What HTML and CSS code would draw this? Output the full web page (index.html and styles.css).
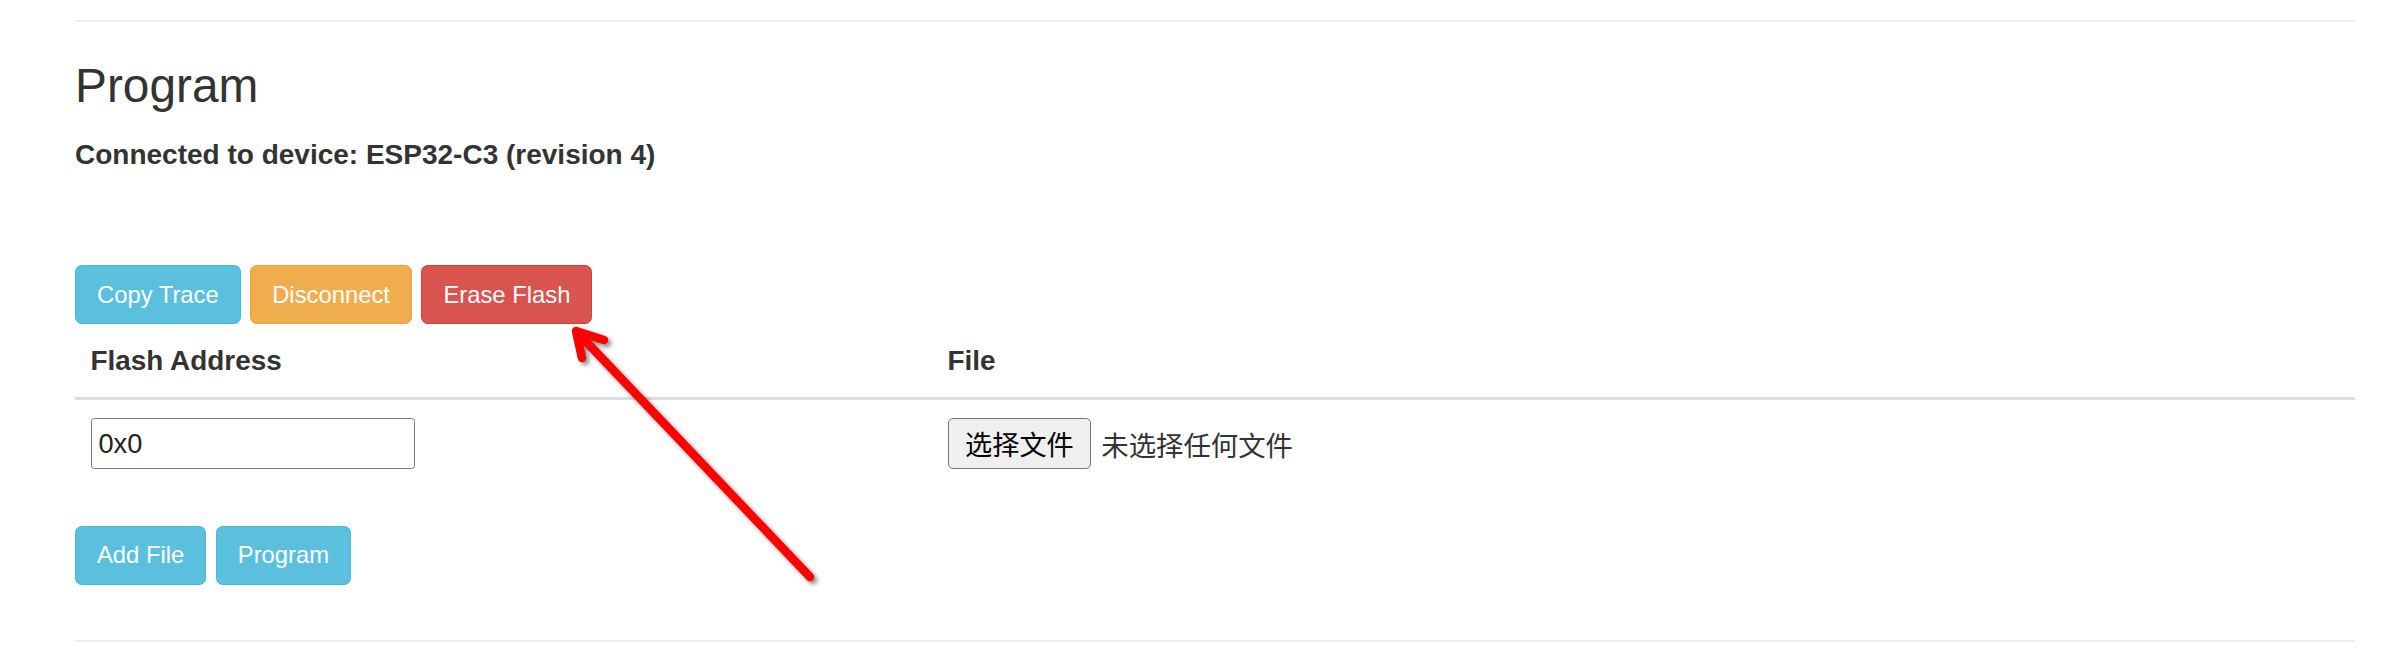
FILE: index.html
```html
<!DOCTYPE html>
<html lang="en">
<head>
<meta charset="utf-8">
<title>Program</title>
<link rel="stylesheet" href="styles.css">
</head>
<body>
<main class="page">
  <hr class="rule">
  <h2 class="title">Program</h2>
  <p class="status">Connected to device: ESP32-C3 (revision 4)</p>
  <div class="actions">
    <button class="btn btn-info">Copy Trace</button>
    <button class="btn btn-warning">Disconnect</button>
    <button class="btn btn-danger">Erase Flash</button>
  </div>
  <table class="files">
    <colgroup><col class="col-addr"><col></colgroup>
    <thead>
      <tr><th>Flash Address</th><th>File</th></tr>
    </thead>
    <tbody>
      <tr>
        <td><div class="cell"><input class="addr" type="text" value="0x0"></div></td>
        <td><div class="cell"><button class="file-btn">选择文件</button><span class="file-label">未选择任何文件</span></div></td>
      </tr>
    </tbody>
  </table>
  <div class="actions actions-bottom">
    <button class="btn btn-info">Add File</button>
    <button class="btn btn-info">Program</button>
  </div>
  <hr class="rule rule-bottom">
</main>
<svg class="arrow" width="2383" height="651" viewBox="0 0 2383 651" aria-hidden="true">
  <path d="M810 577 L576 331 M604 340 L576 331 L582 358" fill="none" stroke="#ff0000" stroke-width="8.5" stroke-linecap="round" stroke-linejoin="round"/>
</svg>
</body>
</html>
```
FILE: styles.css
```css
html, body {
  margin: 0;
  padding: 0;
  background: #ffffff;
}
body {
  position: relative;
  font-family: "Liberation Sans", "Noto Sans CJK SC", sans-serif;
  color: #333333;
}
.page {
  padding: 20px 28px 0 75px;
}
.rule {
  margin: 0;
  height: 0;
  border: 0;
  border-top: 2px solid #eeeeee;
}
.title {
  margin: 38.3px 0 0;
  font-size: 47.8px;
  font-weight: 500;
  line-height: 1.1;
  color: #333333;
}
.status {
  margin: 22px 0 0;
  font-size: 28px;
  font-weight: bold;
  line-height: 39.4px;
}
.actions {
  display: flex;
  gap: 9.5px;
  margin-top: 90.9px;
}
.btn {
  box-sizing: border-box;
  height: 59px;
  padding: 0 21px;
  border: 1.7px solid transparent;
  border-radius: 6.8px;
  font-family: "Liberation Sans", sans-serif;
  font-size: 23.8px;
  line-height: 34px;
  color: #ffffff;
  cursor: pointer;
}
.btn-info {
  background: #5bc0de;
  border-color: #46b8da;
}
.btn-warning {
  background: #f0ad4e;
  border-color: #eea236;
}
.btn-danger {
  background: #d9534f;
  border-color: #d43f3a;
}
.files {
  width: 100%;
  margin-top: 4px;
  border-collapse: collapse;
  table-layout: fixed;
}
.col-addr {
  width: 857px;
}
.files th {
  padding: 13.6px 15.5px 16.6px;
  text-align: left;
  vertical-align: bottom;
  font-size: 27.9px;
  font-weight: bold;
  line-height: 38.9px;
  border-bottom: 3.4px solid #dddddd;
}
.files td {
  padding: 15px 15.5px 13.6px;
  vertical-align: top;
}
.cell {
  display: flex;
  align-items: center;
  height: 56.8px;
}
.addr {
  box-sizing: border-box;
  width: 324px;
  height: 50.5px;
  margin: 0;
  padding: 0 7px;
  border: 1.7px solid #767676;
  border-radius: 3.4px;
  font-family: "Liberation Sans", sans-serif;
  font-size: 27.2px;
  color: #222222;
  background: #ffffff;
}
.file-btn {
  box-sizing: border-box;
  height: 51px;
  margin: 0;
  padding: 0 16.5px;
  border: 1.7px solid #767676;
  border-radius: 5px;
  background: #efefef;
  font-family: "Noto Sans CJK SC", sans-serif;
  font-size: 27.2px;
  line-height: 1;
  color: #000000;
}
.file-label {
  margin-left: 10px;
  font-family: "Noto Sans CJK SC", sans-serif;
  font-size: 27.4px;
  color: #333333;
}
.actions-bottom {
  margin-top: 40px;
}
.rule-bottom {
  margin-top: 55px;
}
.arrow {
  position: absolute;
  top: 0;
  left: 0;
  pointer-events: none;
  filter: drop-shadow(3px 3px 2px rgba(0, 0, 0, 0.45));
}
```
